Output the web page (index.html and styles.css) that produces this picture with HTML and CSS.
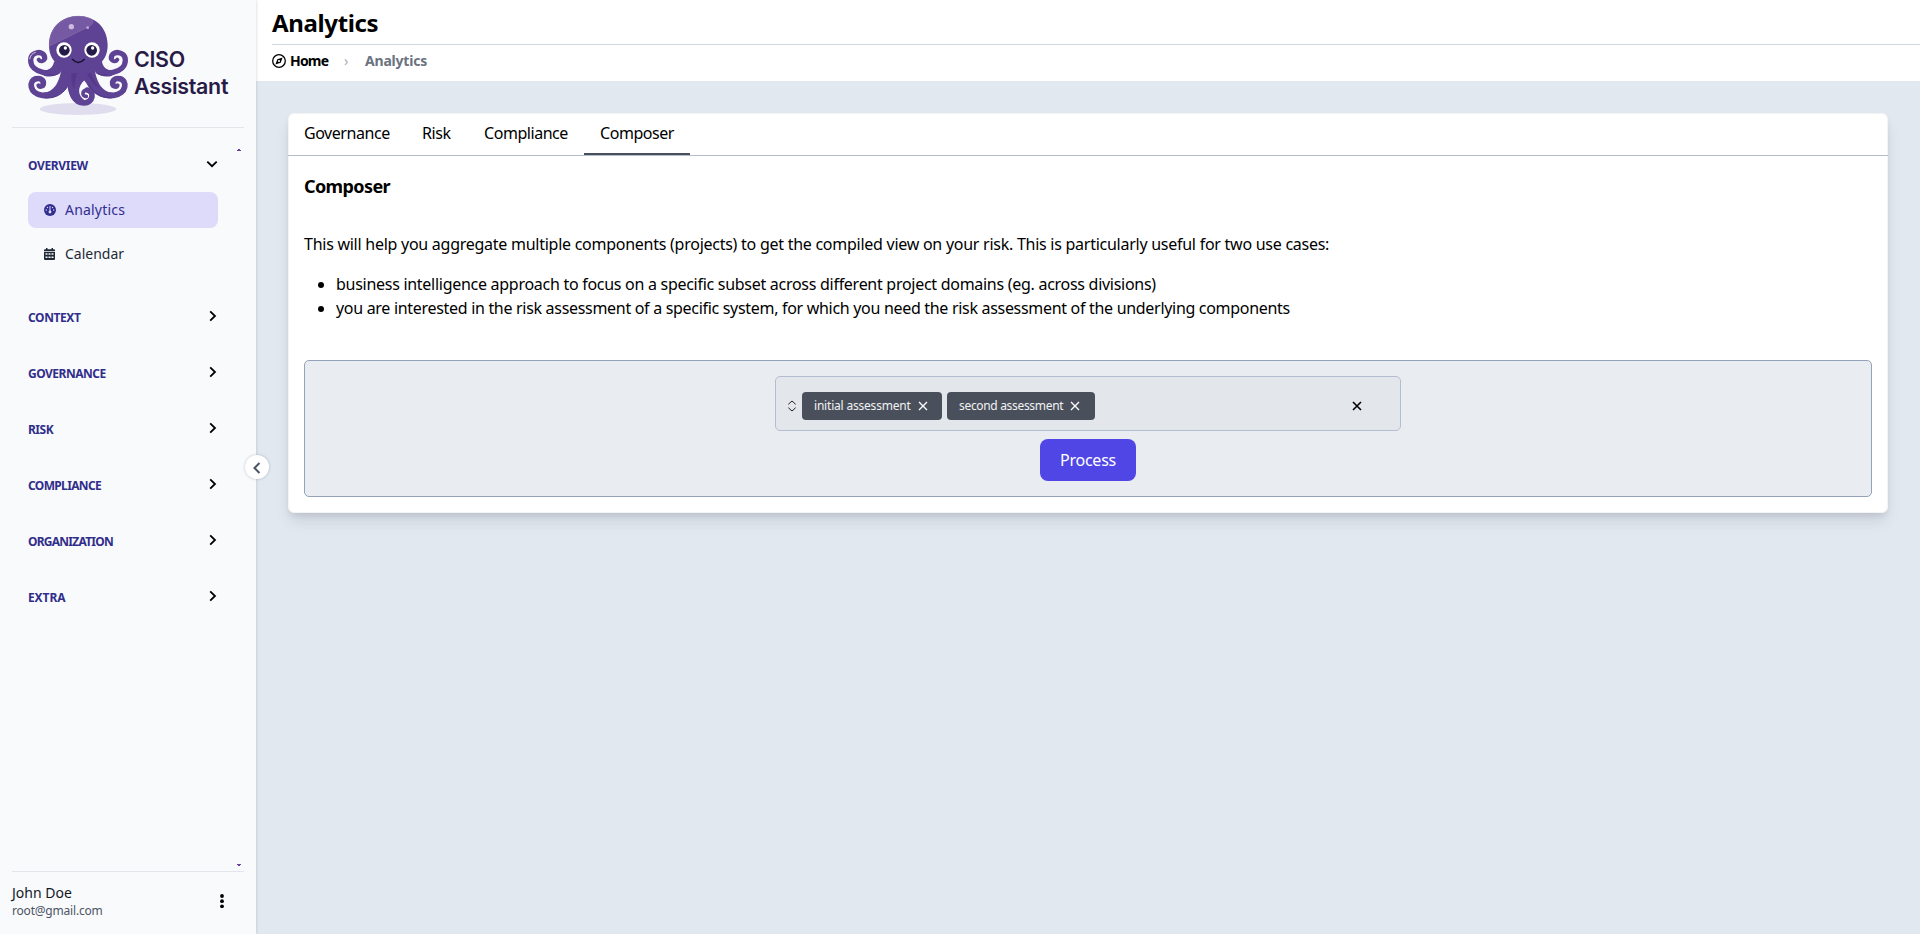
FILE: index.html
```
<!DOCTYPE html>
<html lang="en">
<head>
<meta charset="utf-8">
<title>Analytics</title>
<link rel="stylesheet" href="styles.css">
</head>
<body>
<div class="app">
  <aside class="sidebar">
    <div class="logo">
      <svg class="octopus" viewBox="0 0 324 330">
        <ellipse cx="162" cy="297" rx="115" ry="18" fill="#e0deee"/>
        <defs>
          <g id="arms">
            <path d="M110 172C88 202 20 190 20 151C20 122 62 120 62 144" stroke-width="16"/>
            <path d="M62 143C63 155 49 157 44 149" stroke-width="12"/>
            <path d="M140 195C118 245 90 256 55 256C16 252 12 210 38 206C54 203 62 216 56 226" stroke-width="17"/>
            <path d="M57 222C54 234 45 232 43 226" stroke-width="12"/>
            <path d="M90 155C86 178 66 184 48 180L60 197C78 203 96 198 106 190L112 180C102 232 82 246 56 249L60 264C100 270 128 240 136 220L162 190L162 150Z" fill="#5e4294" stroke="none"/>
          </g>
        </defs>
        <g fill="none" stroke="#5e4294" stroke-linecap="round">
          <use href="#arms"/>
          <use href="#arms" transform="matrix(-1 0 0 1 324 0)"/>
          <path d="M144 195C132 255 155 279 180 279C208 278 212 244 190 240" stroke-width="17"/>
          <path d="M190 240C173 239 173 261 187 259" stroke-width="11"/>
          <path d="M135 180L130 225C134 262 152 280 178 285L181 270C160 255 160 230 182 210L210 180Z" fill="#5e4294" stroke="none"/>
          <path d="M129 232C113 257 88 266 60 264M196 225C211 252 237 266 264 264M76 194C90 198 104 194 112 184M248 194C234 198 220 194 212 184" stroke="#513689" stroke-width="3"/>
          <path d="M144 178C138 208 144 225 151 238C152 214 160 193 160 178Z" fill="#533588" stroke="none" opacity=".7"/>
          <path d="M188 180C188 203 210 225 230 237C210 214 200 196 201 180Z" fill="#533588" stroke="none" opacity=".7"/>
        </g>
        <path d="M75 105C75 52 114 18 163 18S251 52 251 105C251 137 238 152 222 168L200 190H125L104 168C88 152 75 137 75 105Z" fill="#5e4294"/>
        <path d="M76 108C76 52 116 19 162 19C183 19 200 25 207 34C206 43 200 47 190 52Z" fill="#7659a3" stroke="#8970b1" stroke-width="2"/>
        <path d="M17 148C18 138 25 129 35 127" fill="none" stroke="#d8cfe8" stroke-width="3"/>
        <circle cx="142" cy="50" r="8" fill="#d0badf"/><circle cx="191" cy="53" r="4" fill="#c2a9d6"/>
        <circle cx="120" cy="120" r="23" fill="#fff"/><circle cx="204" cy="120" r="23" fill="#fff"/>
        <circle cx="121" cy="121" r="16" fill="#251b48"/><circle cx="203" cy="121" r="16" fill="#251b48"/>
        <circle cx="124" cy="114" r="5" fill="#fff"/><circle cx="206" cy="114" r="5" fill="#fff"/>
        <path d="M145 148Q163 167 181 148" fill="none" stroke="#17102b" stroke-width="4" stroke-linecap="round"/>
      </svg>
      <div class="brand">CISO<br>Assistant</div>
    </div>
    <nav class="nav">
      <div class="group"><span class="label t-overview">OVERVIEW</span><svg class="chev" viewBox="0 0 12 12"><path d="M1.3 3.6L6 8.2l4.7-4.6"/></svg></div>
      <a class="item active"><svg class="item-icon" viewBox="0 0 12 12"><circle cx="6" cy="6" r="6" fill="#312e90"/><path d="M6 2v5" stroke="#dddafa" stroke-width="1"/><circle cx="6" cy="8" r="1.4" fill="#dddafa"/><g fill="#dddafa"><circle cx="3.5" cy="3.5" r=".7"/><circle cx="8.5" cy="3.5" r=".7"/><circle cx="2.3" cy="6" r=".7"/><circle cx="9.7" cy="6" r=".7"/></g></svg><span class="t-nav">Analytics</span></a>
      <a class="item"><svg class="item-icon" viewBox="0 0 12 12"><path fill="#1f2937" d="M2 0h1.5v1.3h4V0H9v1.3h1q1 0 1 1v.9H0v-.9q0-1 1-1h1zM0 4h11v7q0 1-1 1H1q-1 0-1-1z"/><path fill="#f9fafc" d="M1.5 5.3h2v1.5h-2zM4.5 5.3h2v1.5h-2zM7.5 5.3h2v1.5h-2zM1.5 8.5h2V10h-2zM4.5 8.5h2V10h-2zM7.5 8.5h2V10h-2z"/></svg><span>Calendar</span></a>
      <div class="groups">
        <div class="group"><span class="label t-context">CONTEXT</span><svg class="chev" viewBox="0 0 12 12"><path d="M4.2 1.3L9 6l-4.8 4.7"/></svg></div>
        <div class="group"><span class="label t-governance">GOVERNANCE</span><svg class="chev" viewBox="0 0 12 12"><path d="M4.2 1.3L9 6l-4.8 4.7"/></svg></div>
        <div class="group"><span class="label t-risk">RISK</span><svg class="chev" viewBox="0 0 12 12"><path d="M4.2 1.3L9 6l-4.8 4.7"/></svg></div>
        <div class="group"><span class="label t-compliance">COMPLIANCE</span><svg class="chev" viewBox="0 0 12 12"><path d="M4.2 1.3L9 6l-4.8 4.7"/></svg></div>
        <div class="group"><span class="label t-organization">ORGANIZATION</span><svg class="chev" viewBox="0 0 12 12"><path d="M4.2 1.3L9 6l-4.8 4.7"/></svg></div>
        <div class="group"><span class="label t-extra">EXTRA</span><svg class="chev" viewBox="0 0 12 12"><path d="M4.2 1.3L9 6l-4.8 4.7"/></svg></div>
      </div>
      <svg class="scroll-tip tip-up" viewBox="0 0 4 2"><path d="M1 0h2v1h1v1H0V1h1z"/></svg>
      <svg class="scroll-tip tip-down" viewBox="0 0 4 2"><path d="M0 0h4v1H3v1H1V1H0z"/></svg>
    </nav>
    <div class="user">
      <div><div class="name">John Doe</div><div class="email">root@gmail.com</div></div>
      <svg class="dots" viewBox="0 0 4 14"><circle cx="2" cy="2" r="1.9"/><circle cx="2" cy="7.2" r="1.9"/><circle cx="2" cy="12.3" r="1.9"/></svg>
    </div>
    <button class="toggle" aria-label="Collapse"><svg viewBox="0 0 12 14"><path d="M8.5 2L3.5 7l5 5"/></svg></button>
  </aside>
  <div class="page">
    <header class="header">
      <h1 class="title">Analytics</h1>
      <div class="crumbs">
        <svg class="compass" viewBox="0 0 14 14"><circle cx="7" cy="7" r="6.3" fill="none" stroke="#000" stroke-width="1.3"/><path fill="#000" fill-rule="evenodd" d="M10.6 3.4L8.7 8.7 3.4 10.6 5.3 5.3zM7 5.9a1.1 1.1 0 1 0 0 2.2 1.1 1.1 0 0 0 0-2.2z"/></svg>
        <span class="home">Home</span><span class="sep">›</span><span class="here">Analytics</span>
      </div>
    </header>
    <main class="card">
      <div class="tabs"><span class="tab w-gov">Governance</span><span class="tab w-risk">Risk</span><span class="tab w-comp">Compliance</span><span class="tab selected">Composer</span></div>
      <div class="panel">
        <h2 class="heading">Composer</h2>
        <p class="intro">This will help you aggregate multiple components (projects) to get the compiled view on your risk. This is particularly useful for two use cases:</p>
        <ul class="uses">
          <li class="use-one">business intelligence approach to focus on a specific subset across different project domains (eg. across divisions)</li>
          <li class="use-two">you are interested in the risk assessment of a specific system, for which you need the risk assessment of the underlying components</li>
        </ul>
        <div class="form">
          <div class="select">
            <svg class="expand" viewBox="0 0 10 12"><path d="M1.3 4.3L5 1l3.7 3.3M1.3 7.7L5 11l3.7-3.3"/></svg>
            <span class="chip chip-one"><span>initial assessment</span><svg class="x" viewBox="0 0 10 10"><path d="M1 1l8 8M9 1L1 9"/></svg></span>
            <span class="chip chip-two"><span>second assessment</span><svg class="x" viewBox="0 0 10 10"><path d="M1 1l8 8M9 1L1 9"/></svg></span>
            <svg class="clear" viewBox="0 0 10 10"><path d="M1 1l8 8M9 1L1 9"/></svg>
          </div>
          <button class="process">Process</button>
        </div>
      </div>
    </main>
  </div>
</div>
</body>
</html>
```
FILE: styles.css
```
* { box-sizing: border-box; }
body { margin: 0; font: 16px/24px "Noto Sans", sans-serif; color: #000; background: #e1e8ef; }
h1, h2, p, ul { margin: 0; }
button { border: 0; padding: 0; font: inherit; }
svg { display: block; flex: none; }
.app { display: flex; height: 934px; }

.sidebar { position: relative; z-index: 1; width: 256px; flex: none; display: flex; flex-direction: column; padding: 0 12px; background: #f9fafc; box-shadow: 0 0 3px rgba(60, 70, 100, .25); }
.logo { display: flex; height: 128px; padding: 10px 0 0 12px; border-bottom: 1px solid #e3e5ea; }
.octopus { width: 108px; height: 110px; }
.brand { padding: 36px 0 0 2px; font: 600 21.4px/26.5px Inter, sans-serif; letter-spacing: -.3px; color: #281c47; }
.nav { position: relative; flex: 1; padding: 9px 26px 0 16px; }
.group { display: flex; align-items: center; justify-content: space-between; height: 56px; }
.label { padding-top: 2px; font-size: 12px; font-weight: 700; line-height: 16px; color: #312e8b; }
.chev { width: 12px; height: 12px; margin-top: -3px; }
.nav .chev path { fill: none; stroke: #000; stroke-width: 1.8; }
.item { display: flex; align-items: center; gap: 9px; width: 190px; height: 36px; margin-bottom: 8px; padding-left: 16px; border-radius: 8px; font-size: 14px; color: #1f2937; }
.group + .item { margin-top: -1px; }
.item.active { background: #dddafa; color: #312e90; }
.item-icon { width: 12px; height: 12px; margin-top: -1px; }
.groups { padding-top: 9px; }
.t-overview { letter-spacing: -.35px; }
.t-context { letter-spacing: -.4px; }
.t-governance { letter-spacing: -.5px; }
.t-risk { letter-spacing: -.5px; }
.t-compliance { letter-spacing: -.65px; }
.t-organization { letter-spacing: -.75px; }
.t-extra { letter-spacing: -.1px; }
.t-nav { letter-spacing: .2px; }
.scroll-tip { position: absolute; right: 3px; width: 4px; height: 2px; fill: #6b3f99; }
.tip-up { top: 21px; }
.tip-down { bottom: 5px; }
.user { display: flex; align-items: center; justify-content: space-between; height: 63px; padding: 0 20px 4px 0; border-top: 1px solid #e3e5ea; }
.name { font-size: 14px; line-height: 20px; color: #111827; }
.email { font-size: 12px; line-height: 16px; letter-spacing: -.2px; color: #4b5563; }
.dots { width: 4px; height: 14px; }
.toggle { position: absolute; left: 245px; top: 455px; display: grid; place-items: center; width: 24px; height: 24px; border-radius: 50%; background: #fff; box-shadow: 0 0 3px rgba(60, 70, 100, .3); }
.toggle svg { width: 12px; height: 14px; margin-top: 1px; }
.toggle path { fill: none; stroke: #4b5563; stroke-width: 2; }

.page { flex: 1; min-width: 0; }
.header { height: 81px; padding-left: 16px; background: #fff; }
.title { height: 45px; padding-top: 7px; border-bottom: 1px solid #d0d7e4; font-size: 24px; line-height: 32px; font-weight: 700; letter-spacing: -.35px; }
.crumbs { display: flex; align-items: center; height: 32px; font-size: 14px; font-weight: 700; }
.compass { width: 14px; height: 14px; margin-right: 4px; }
.home { width: 54px; letter-spacing: -.8px; }
.sep { width: 21px; font-weight: 400; color: #a7acb5; }
.here { letter-spacing: -.2px; color: #6b7280; }

.card { height: 400px; margin: 32px 32px 0; border: 1px solid #f3f4f6; border-radius: 6px; background: #fff; box-shadow: 0 10px 15px -3px rgba(50, 50, 80, .13), 0 4px 6px -2px rgba(50, 50, 80, .12); }
.tabs { display: flex; height: 42px; margin: 0 -1px; border-bottom: 1px solid #b3bdcc; letter-spacing: -.45px; }
.tab { height: 41px; padding: 7px 0 0 16px; }
.w-gov { width: 118px; }
.w-risk { width: 62px; }
.w-comp { width: 116px; }
.selected { width: 106px; border-bottom: 2px solid #4a505b; }
.panel { padding: 16px 15px 0; }
.heading { font-size: 18px; line-height: 28px; font-weight: 700; letter-spacing: -.6px; }
.intro { margin-top: 32px; letter-spacing: -.26px; white-space: nowrap; }
.uses { margin-top: 16px; padding-left: 32px; white-space: nowrap; }
.use-one { letter-spacing: -.28px; }
.use-two { letter-spacing: -.305px; }
.form { display: flex; flex-direction: column; align-items: center; gap: 8px; height: 137px; margin-top: 40px; padding-top: 15px; border: 1px solid #94a3b8; border-radius: 5px; background: #e9ecf1; }
.select { display: flex; align-items: center; width: 626px; height: 55px; padding: 4px 38px 0 11px; border: 1px solid #b3bfd0; border-radius: 5px; background: #e3e6eb; }
.expand { width: 10px; height: 12px; margin-right: 5px; fill: none; stroke: #222; stroke-width: 1; }
.chip { display: flex; align-items: center; gap: 7px; height: 28px; margin-right: 5px; padding-left: 12px; border-radius: 4px; background: #4a505b; color: #f1f2f4; font-size: 12px; white-space: nowrap; }
.chip-one { width: 140px; letter-spacing: -.2px; }
.chip-two { width: 148px; letter-spacing: -.32px; }
.x { width: 10px; height: 10px; fill: none; stroke: #fff; stroke-width: 1.3; }
.clear { width: 10px; height: 10px; margin-left: auto; fill: none; stroke: #000; stroke-width: 1.6; }
.process { width: 96px; height: 42px; border-radius: 8px; background: #4f46e5; color: #fff; letter-spacing: -.25px; }
```
